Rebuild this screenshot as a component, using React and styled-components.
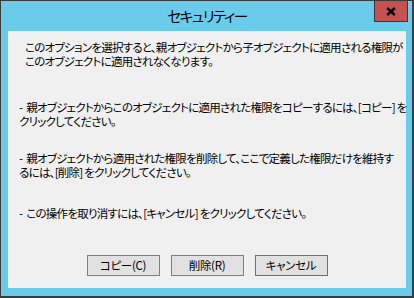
import React from "react";
import styled, { createGlobalStyle } from "styled-components";

const Global = createGlobalStyle`
  html, body { margin: 0; padding: 0; background: #6acbea; }
  * { box-sizing: border-box; }
`;

const FONT = `"Noto Sans CJK JP", "Noto Sans", sans-serif`;

const Window = styled.div`
  position: relative;
  width: 414px;
  height: 298px;
  display: flex;
  flex-direction: column;
  background: #6acbea;
  border-style: solid;
  border-color: #3b3b3b;
  border-width: 1px 2px 2px 1px;
  padding: 0 6px 8px 7px;
  font-family: ${FONT};
  font-feature-settings: "palt";
  color: #000;
`;

const TitleBar = styled.div`
  height: 30px;
  display: flex;
  align-items: center;
  justify-content: center;
  flex: none;
`;

const Title = styled.span`
  font-size: 14.5px;
  line-height: 28px;
  letter-spacing: -1.4px;
  padding-bottom: 1px;
`;

const CloseButton = styled.div`
  position: absolute;
  top: 0;
  right: 4px;
  width: 34px;
  height: 21px;
  background: #c75050;
  border: 1px solid #3a3a3a;
  border-top: none;
  display: flex;
  align-items: center;
  justify-content: center;
`;

const Content = styled.div`
  flex: 1;
  background: #f0f0f0;
  display: flex;
  flex-direction: column;
  padding: 9px 0 12px 11px;
`;

const Message = styled.p`
  margin: ${(p) => p.$top}px 0 0 ${(p) => p.$indent || 0}px;
  font-size: 11.5px;
  line-height: 14px;
  letter-spacing: -0.75px;
  white-space: nowrap;
`;

const Dash = styled.span`
  margin-right: 4px;
`;

const ButtonRow = styled.div`
  margin-top: auto;
  display: flex;
  justify-content: center;
  gap: 11px;
  padding-right: 11px;
`;

const Button = styled.div`
  width: 73px;
  height: 21px;
  display: flex;
  align-items: center;
  justify-content: center;
  background: #e1e1e1;
  border: 1px solid ${(p) => (p.$default ? "#3c7fb1" : "#7f7f7f")};
  font-size: 11.5px;
  letter-spacing: -0.3px;
  line-height: 1;
`;

export default function App() {
  return (
    <>
      <Global />
      <Window>
        <TitleBar>
          <Title>セキュリティー</Title>
        </TitleBar>
        <CloseButton>
          <svg width="10" height="9" viewBox="0 0 10 9">
            <path d="M1.2 1 L8.8 8 M8.8 1 L1.2 8" stroke="#000" strokeWidth="2.4" fill="none" />
          </svg>
        </CloseButton>
        <Content>
          <Message $top={0} $indent={6}>
            このオプションを選択すると、親オブジェクトから子オブジェクトに適用される権限が
            <br />
            このオブジェクトに適用されなくなります。
          </Message>
          <Message $top={32}>
            <Dash>-</Dash>親オブジェクトからこのオブジェクトに適用された権限をコピーするには、[コピー] を
            <br />
            クリックしてください。
          </Message>
          <Message $top={23}>
            <Dash>-</Dash>親オブジェクトから適用された権限を削除して、ここで定義した権限だけを維持す
            <br />
            るには、[削除] をクリックしてください。
          </Message>
          <Message $top={27}>
            <Dash>-</Dash>この操作を取り消すには、[キャンセル] をクリックしてください。
          </Message>
          <ButtonRow>
            <Button>コピー(C)</Button>
            <Button>削除(R)</Button>
            <Button $default>キャンセル</Button>
          </ButtonRow>
        </Content>
      </Window>
    </>
  );
}
